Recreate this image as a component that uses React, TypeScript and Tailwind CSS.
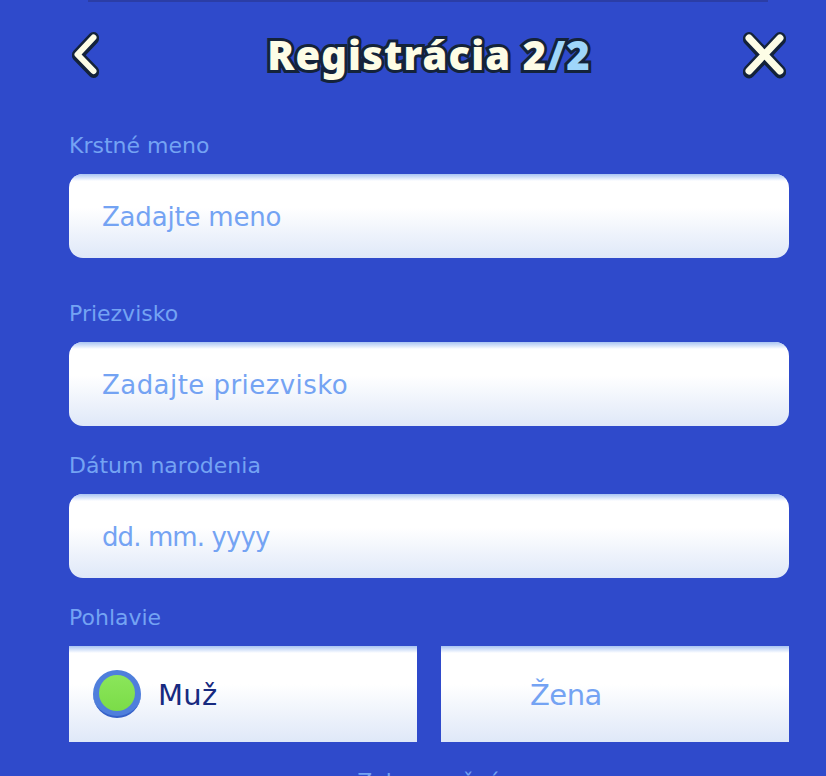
function Stroked({ d, w, cls, vb }: { d: string; w: number; cls: string; vb: string }) {
  return (
    <svg viewBox={vb} className={cls} fill="none" strokeLinecap="round" strokeLinejoin="round">
      <path d={d} stroke="#14233a" strokeWidth={w + 5} transform="translate(0 1.5)" />
      <path d={d} stroke="#14233a" strokeWidth={w + 5} />
      <path d={d} stroke="#fdfde6" strokeWidth={w} />
    </svg>
  );
}

function Field({ label, placeholder, className, track }: { label: string; placeholder: string; className: string; track: string }) {
  return (
    <div className={className}>
      <div className="text-[22px] leading-[32px] text-[#74a3f3]">{label}</div>
      <div className="mt-[12px] h-[84px] rounded-[14px] bg-gradient-to-b from-white from-40% to-[#dfe8f8] flex items-center pl-[33px] text-[26px] text-[#74a3f3] relative overflow-hidden">
        <div className="absolute left-0 right-0 top-0 h-[7px] bg-gradient-to-b from-[#a9c4f2] to-white" />
        <span className={`relative pt-[2px] ${track}`}>{placeholder}</span>
      </div>
    </div>
  );
}

export default function App() {
  return (
    <div className="w-[826px] h-[776px] bg-[#2f4acb] overflow-hidden relative font-['DejaVu_Sans',sans-serif]">
      <div className="absolute left-[88px] top-0 w-[680px] h-[2px] bg-[#2b3da6]" />
      <div className="pl-[69px]">
        <div className="h-[130px] w-[720px] flex items-start justify-between text-[#fdfde6]">
          <div className="mt-[27px] w-[48px]"><Stroked vb="0 0 40 56" cls="w-[40px] h-[56px]" w={6} d="M24.5 10.5 L8.5 27.5 L24.5 44" /></div>
          <div
            className="mt-[27px] text-[40px] leading-[56px] font-black tracking-[1.1px]"
            style={{ fontFamily: '"Noto Sans", sans-serif', WebkitTextStroke: '6px #14233a', paintOrder: 'stroke fill', textShadow: '0 2px 0 #14233a' }}
          >
            Registrácia 2<span className="text-[#9fd6fa]">/2</span>
          </div>
          <div className="mt-[27px]"><Stroked vb="0 0 48 56" cls="w-[48px] h-[56px]" w={7} d="M8 11 L39 44 M39 11 L8 44" /></div>
        </div>
        <div className="w-[720px]">
          <Field label="Krstné meno" placeholder="Zadajte meno" track="tracking-[-0.2px]" className="" />
          <Field label="Priezvisko" placeholder="Zadajte priezvisko" track="tracking-[0.45px]" className="mt-[40px]" />
          <Field label="Dátum narodenia" placeholder="dd. mm. yyyy" track="tracking-[-0.9px]" className="mt-[24px]" />
          <div className="mt-[24px] text-[22px] leading-[32px] text-[#74a3f3]">Pohlavie</div>
          <div className="mt-[12px] flex gap-[24px]">
            <div className="w-[348px] h-[96px] relative bg-gradient-to-b from-white from-40% to-[#dfe8f8] flex items-center pl-[24px] text-[29px] text-[#172a80]">
              <div className="absolute left-0 right-0 top-0 h-[7px] bg-gradient-to-b from-[#a9c4f2] to-white" />
              <div className="relative w-[48px] h-[48px] rounded-full bg-[#4f7fdc] border-b-2 border-[#3560c8] flex items-center justify-center">
                <div className="w-[36px] h-[36px] rounded-full bg-gradient-to-b from-[#8be65a] to-[#7bdc48]" />
              </div>
              <span className="ml-[17px] pt-[4px] tracking-[0.3px]">Muž</span>
            </div>
            <div className="w-[348px] h-[96px] relative bg-gradient-to-b from-white from-40% to-[#dfe8f8] flex items-center pl-[89px] text-[29px] text-[#74a3f3]">
              <div className="absolute left-0 right-0 top-0 h-[7px] bg-gradient-to-b from-[#a9c4f2] to-white" />
              <span className="relative pt-[4px] tracking-[-0.5px]">Žena</span>
            </div>
          </div>
          <div className="mt-[24px] text-center text-[22px] leading-[32px] text-[#74a3f3]">Zobrazenčné</div>
        </div>
      </div>
    </div>
  );
}
